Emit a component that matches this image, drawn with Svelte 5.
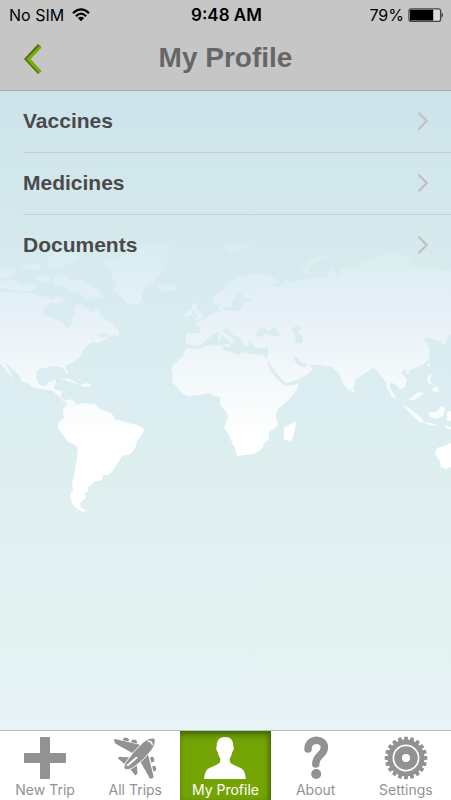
<script lang="ts">
	const items = ['Vaccines', 'Medicines', 'Documents'];
	const tabs = [
		{ id: 'new', label: 'New Trip' },
		{ id: 'trips', label: 'All Trips' },
		{ id: 'profile', label: 'My Profile' },
		{ id: 'about', label: 'About' },
		{ id: 'settings', label: 'Settings' }
	];
	// gear teeth, one every 18 degrees
	const teeth = Array.from({ length: 20 }, (_, i) => i * 18);

	let active = $state('profile');
</script>

<div class="app">
	<header>
		<div class="status">
			<div class="carrier">
				<span>No SIM</span>
				<svg width="18" height="14" viewBox="0 0 18 14" aria-hidden="true">
					<g fill="none" stroke="#000" stroke-width="2.2">
						<path d="M1 5.2Q9-2.4 17 5.2" />
						<path d="M3.9 8.2Q9 3.2 14.1 8.2" />
					</g>
					<path d="M5.8 10.1Q9 7.3 12.2 10.1L9 13.3Z" />
				</svg>
			</div>
			<strong>9:48 AM</strong>
			<div class="battery">
				<span>79%</span>
				<svg width="36" height="14" viewBox="0 0 36 14" aria-hidden="true">
					<rect x="1" y="0.8" width="31.6" height="12.6" rx="2" fill="#ddd" stroke="#444" stroke-width="1.3" />
					<rect x="2" y="1.8" width="23.2" height="10.6" rx="0.5" />
					<path d="M33.7 4.4Q35.8 7 33.7 9.7Z" />
				</svg>
			</div>
		</div>
		<div class="nav">
			<button class="back" aria-label="Back">
				<svg width="20" height="32" viewBox="0 0 20 32" aria-hidden="true">
					<path d="M15.6 1.5 3 15 15.6 28.5" fill="none" stroke="#4c7010" stroke-width="4.5" />
					<path d="M16.1 3 4.3 15.3 16.1 28" fill="none" stroke="#79ad08" stroke-width="3" />
				</svg>
			</button>
			<h1>My Profile</h1>
		</div>
	</header>

	<main>
		<svg class="map" viewBox="0 240 451 280" aria-hidden="true">
			<defs>
				<linearGradient id="land" gradientUnits="userSpaceOnUse" x1="0" y1="240" x2="0" y2="440">
					<stop offset="0" stop-color="#d8ecef" />
					<stop offset="0.2" stop-color="#dfeff3" />
					<stop offset="0.4" stop-color="#e8f1f8" />
					<stop offset="0.65" stop-color="#f2f8fa" />
					<stop offset="1" stop-color="#fff" />
				</linearGradient>
			</defs>
			<g fill="url(#land)">
				<!-- North and Central America -->
				<path d="M0 292 10 291 20 293 32 293 40 296 48 297 56 301 57 303 50 303 42 311 44 315 49 316 55 320 62 321 64 325 67 328 71 326 72 321 70 319 74 316 73 309 77 304 82 305 85 307 89 311 92 313 97 309 100 315 104 319 110 322 115 326 119 332 119 337 114 335 109 337 107 333 100 333 99 336 103 338 108 336 105 340 97 343 92 342 88 345 82 352 80 357 72 363 65 366 68 373 66 374 63 368 59 367 55 367 50 366 47 368 41 368 37 371 36 378 39 385 45 386 48 382 56 380 55 386 53 387 56 390 62 391 61 397 65 401 70 399 76 402 70 405 63 401 60 397 57 395 53 391 48 390 40 389 33 387 28 384 21 381 20 377 16 372 12 369 8 365 5 363 13 377 11 377 6 370 0 363Z" />
				<!-- Arctic islands -->
				<path d="M0 270 10 268 18 272 10 277 0 277ZM0 281 14 280 24 285 32 283 37 288 28 291 14 290 0 288ZM20 266 34 263 45 267 35 271 24 270ZM35 276 48 274 52 280 42 284ZM47 260 58 250 78 243 105 241 99 248 82 253 73 262 60 268 49 267ZM54 276 64 273 71 281 82 280 91 286 98 289 103 299 92 296 85 299 80 293 70 291 62 286 54 285ZM56 296 66 299 61 303 54 302Z" />
				<!-- Greenland, Iceland -->
				<path d="M103 263 111 259 123 256 137 246 154 243 173 246 166 253 169 260 163 264 167 270 157 277 153 283 146 286 142 293 141 301 137 305 127 303 122 298 118 294 113 290 117 282 112 278 112 270ZM159 286 166 284 177 285 177 289 168 292 161 290Z" />
				<!-- Caribbean -->
				<path d="M59 379 68 378 79 384 73 383 65 380ZM82 384 89 383 92 386 85 387 80 386Z" />
				<!-- South America -->
				<path d="M63 409 67 404 72 402 78 405 80 403 95 404 100 409 110 413 114 416 115 420 119 420 125 422 132 424 138 425 144 429 143 433 137 441 136 446 133 451 130 454 122 456 118 463 112 472 108 475 103 475 102 480 93 482 92 485 88 487 88 492 84 493 86 498 80 503 81 508 87 511 82 512 76 508 72 503 70 495 73 490 72 485 75 470 77 457 78 448 74 444 68 442 63 435 58 428 59 422 64 418Z" />
				<!-- Africa -->
				<path d="M187 348 197 349 208 346 222 345 223 350 231 352 238 355 242 352 252 354 263 355 267 360 270 370 276 378 283 384 285 386 299 384 297 389 293 395 285 403 277 410 276 416 278 425 273 429 268 433 269 440 264 443 263 447 258 452 253 454 245 455 237 456 235 448 232 443 230 436 224 428 228 418 226 411 220 405 220 397 215 396 210 393 199 395 187 396 181 392 177 387 172 382 173 376 171 370 174 364 180 359 183 357 184 352ZM295 421 296 425 292 440 288 441 284 439 284 427 289 425Z" />
				<!-- Europe and Asia -->
				<path d="M186 333 200 333 200 327 194 323 203 320 212 314 220 312 218 307 222 304 224 310 232 311 240 310 243 303 255 300 247 299 242 296 245 290 238 293 233 300 232 307 225 307 220 303 213 303 213 297 223 290 230 282 237 278 250 274 263 274 274 278 280 282 270 285 278 287 285 283 287 279 292 283 300 280 310 279 320 277 328 279 328 272 333 268 338 282 340 270 345 268 357 267 366 262 373 260 383 255 393 254 403 255 413 258 407 265 427 267 439 270 451 271 451 334 447 337 447 341 443 346 440 341 437 340 427 337 423 341 427 342 430 352 428 360 424 364 417 367 410 370 403 370 402 373 407 380 405 387 400 389 395 384 390 382 390 388 397 399 392 397 387 388 386 382 380 375 377 370 373 368 367 372 359 377 355 380 354 386 349 391 343 383 338 372 335 370 332 367 320 365 310 365 302 363 298 358 293 356 296 363 300 366 306 367 308 364 313 369 307 375 300 378 294 381 285 383 277 374 271 366 267 360 268 352 268 347 259 348 253 346 251 340 248 342 249 346 246 346 242 342 240 337 233 335 227 328 223 330 226 334 235 340 232 344 225 337 217 332 212 335 203 343 198 346 186 344Z" />
				<!-- British Isles, Svalbard, Novaya Zemlya -->
				<path d="M192 304 197 303 197 309 203 316 205 318 194 320 198 315 192 310ZM187 311 192 309 192 315 186 317 184 315ZM224 247 238 244 254 244 249 247 237 251 233 254 227 251ZM331 255 320 257 309 262 301 269 303 273 311 273 307 268 316 262ZM218 334 221 334 221 340 218 340ZM223 344 230 344 228 348Z" />
				<!-- South-East Asia, Japan, Australia -->
				<path d="M352 388 355 390 354 393 351 391ZM427 364 430 363 429 368ZM406 371 409 370 409 374 405 373ZM428 375 431 374 430 382 434 385 429 384 427 380ZM431 389 437 386 439 391 435 393ZM408 400 418 392 424 393 415 400ZM402 404 412 410 423 419 423 422 431 423 440 426 431 425 420 422 412 415ZM428 412 436 412 441 406 445 408 443 416 437 419 430 417ZM447 412 451 411 451 421 447 420ZM445 426 451 427 451 429 445 428ZM451 442 447 445 437 448 435 454 440 461 441 467 446 469 451 467Z" />
			</g>
			<!-- Black Sea and Caspian Sea -->
			<path fill="#d9ecee" d="M257 331 261 327 265 328 267 331 272 329 274 326 276 330 281 336 272 336 265 334 260 337 256 336ZM291 329 296 326 302 327 300 331 297 331 303 337 303 342 299 344 295 342 296 336Z" />
		</svg>
		<ul>
			{#each items as item}
				<li>
					<a href="#{item.toLowerCase()}">
						<span>{item}</span>
						<svg width="12" height="20" viewBox="0 0 12 20" aria-hidden="true">
							<path d="M1.5 1.8 9.7 10 1.5 18.2" fill="none" stroke="#c0bfc8" stroke-width="2.2" />
						</svg>
					</a>
				</li>
			{/each}
		</ul>
	</main>

	<nav class="tabs">
		{#each tabs as tab}
			<a
				href="#{tab.id}"
				class:active={active === tab.id}
				aria-current={active === tab.id ? 'page' : undefined}
				onclick={() => (active = tab.id)}
			>
				<svg width="44" height="44" viewBox="0 0 44 44" fill="currentColor" aria-hidden="true">
					{#if tab.id === 'new'}
						<path d="M18 1h8q1 0 1 1v15h15q1 0 1 1v8q0 1-1 1H27v15q0 1-1 1h-8q-1 0-1-1V27H2q-1 0-1-1v-8q0-1 1-1h15V2q0-1 1-1Z" />
					{:else if tab.id === 'trips'}
						<!-- wings, tail, engines -->
						<path d="M1 4Q1.4 2.8 3 3.2L30 9.5 21 18 2.2 7.4ZM34.6 17 40.6 40.4Q40.6 41.8 39 42.4L36.8 42.4 26.5 24ZM5 22.6 6.2 20.8 17 21.4 11.5 28ZM16 31.5 23.5 27 24.6 37.4 22.4 39.6Z" />
						<path d="M10 4.2 10.4 2.2Q13.6 .2 16 3.2L15.6 5.4ZM18.2 6.2 18.8 4Q22 2.4 24.2 5.4L23.8 7.4ZM37 21.8 39 20.6Q42.2 22 41 25.4L38.4 26.8ZM39.2 30.6 41.2 29.4Q44.2 31.2 42.8 34.4L40.4 35.6Z" />
						<!-- body -->
						<path stroke="#fff" stroke-width="1" d="M31 5.4Q37 .9 41.8 2.1 43.6 7.5 38.4 14.4 31 24.5 20.5 31.4 14.5 35 11.4 33 9.8 30.2 13.6 25.2 20 15.5 31 5.4Z" />
						<path fill="none" stroke="#fff" stroke-width="2" stroke-linecap="round" d="M14.8 29.2 23.4 21.8" />
						<path fill="none" stroke="#fff" stroke-width="1.5" stroke-linecap="round" d="M35.4 5.2Q38.4 5 39.2 8.4" />
					{:else if tab.id === 'profile'}
						<path d="M22 1C16.2 1 13.4 4.6 13.8 10.5 12.6 11 13.4 15 14.8 16 15.2 18.8 16 20.6 17.2 22.2 17.4 25.4 17 27 14.6 28.2L6 32.2C2.4 34 2 37.4 1 43H43C42 37.4 41.6 34 38 32.2L29.4 28.2C27 27 26.6 25.4 26.8 22.2 28 20.6 28.8 18.8 29.2 16 30.6 15 31.4 11 30.2 10.5 30.6 4.6 27.8 1 22 1Z" />
					{:else if tab.id === 'about'}
						<path fill="none" stroke="currentColor" stroke-width="7.5" stroke-linecap="round" d="M14 13C14 1.4 30.4 1.8 30.4 11.4 30.4 19 21.8 19 21.8 28" />
						<circle cx="22.2" cy="38" r="5" />
					{:else}
						{#each teeth as angle}
							<rect x="20.1" y="0.7" width="3.8" height="6" rx="0.7" transform="rotate({angle} 22 22)" />
						{/each}
						<circle cx="22" cy="22" r="16" fill="none" stroke="currentColor" stroke-width="5" />
						<circle cx="22" cy="22" r="7.9" fill="none" stroke="currentColor" stroke-width="7.8" />
					{/if}
				</svg>
				<span>{tab.label}</span>
			</a>
		{/each}
	</nav>
</div>

<style>
	:global(body) {
		margin: 0;
	}

	.app {
		display: flex;
		flex-direction: column;
		min-height: 100vh;
		font-family: 'Liberation Sans', Arial, sans-serif;
	}

	header {
		background: #c6c6c6;
		border-bottom: 1px solid #a5adb0;
	}
	.status {
		display: grid;
		grid-template-columns: 1fr auto 1fr;
		align-items: center;
		height: 30px;
		padding: 0 7px 0 9px;
		font-family: Inter, sans-serif;
		font-size: 16px;
		line-height: 20px;
		color: #000;
	}
	.status strong {
		font-size: 17px;
		font-weight: 600;
	}
	.carrier,
	.battery {
		display: flex;
		align-items: center;
		gap: 8px;
	}
	.battery {
		justify-content: flex-end;
		gap: 4px;
	}

	.nav {
		display: grid;
		grid-template-columns: 64px 1fr 64px;
		align-items: center;
		height: 60px;
	}
	.back {
		display: flex;
		padding: 0 0 0 24px;
		border: none;
		background: none;
		cursor: pointer;
	}
	h1 {
		margin: 0;
		font-size: 28px;
		line-height: 32px;
		text-align: center;
		color: #666;
		padding-bottom: 4px;
	}

	main {
		position: relative;
		flex: 1;
		background: linear-gradient(#cce3ea, #d6eaed 23%, #dceef1 50%, #dfefef 62%, #e7f3f4);
	}
	/* sits behind the list */
	.map {
		position: absolute;
		top: 149px;
		left: 0;
		width: 100%;
	}
	ul {
		position: relative;
		margin: 0;
		padding: 0 0 0 23px;
		list-style: none;
	}
	li {
		border-bottom: 1px solid #bfd0d7;
	}
	li:last-child {
		border-bottom: none;
	}
	li a {
		display: flex;
		align-items: center;
		justify-content: space-between;
		box-sizing: border-box;
		height: 61px;
		padding: 0 22px 2px 0;
		font-size: 21px;
		font-weight: bold;
		color: #4a4a4a;
		text-decoration: none;
	}

	.tabs {
		display: grid;
		grid-template-columns: repeat(5, 1fr);
		background: #fff;
		border-top: 1px solid #b2c3c5;
	}
	.tabs a {
		display: flex;
		flex-direction: column;
		align-items: center;
		gap: 2px;
		padding: 5px 0 2px;
		font-family: Inter, sans-serif;
		font-size: 14px;
		line-height: 16px;
		color: #929292;
		text-decoration: none;
		white-space: nowrap;
	}
	.tabs a.active {
		color: #fff;
		background: #74a404;
		box-shadow:
			inset 0 5px 7px -2px #416006,
			inset -4px 0 5px -2px #4c7005;
	}
</style>
